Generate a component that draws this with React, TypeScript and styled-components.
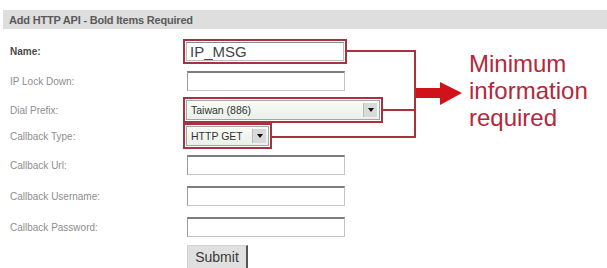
import React from "react";
import styled, { createGlobalStyle } from "styled-components";

const GlobalStyle = createGlobalStyle`
  html, body {
    margin: 0;
    padding: 0;
    background: #ffffff;
    font-family: "Liberation Sans", Arial, sans-serif;
  }
`;

const Page = styled.div`
  position: relative;
  width: 607px;
  height: 268px;
  overflow: hidden;
  padding-top: 10px;
  box-sizing: border-box;
`;

const HeaderBar = styled.div`
  margin-left: 3px;
  height: 19px;
  background: #dedede;
  display: flex;
  align-items: center;
  padding-left: 6px;
  font-size: 11px;
  font-weight: bold;
  color: #5a5a5a;
  letter-spacing: -0.2px;
`;

const Form = styled.div`
  display: flex;
  flex-direction: column;
  padding-top: 8px;
`;

const Row = styled.div<{ $h: number }>`
  display: grid;
  grid-template-columns: 183px 1fr;
  align-items: center;
  height: ${(p) => p.$h}px;
`;

const Label = styled.div<{ $bold?: boolean }>`
  padding-left: 10px;
  font-size: 10px;
  color: ${(p) => (p.$bold ? "#4a4a4a" : "#8e8e8e")};
  font-weight: ${(p) => (p.$bold ? "bold" : "normal")};
`;

const Required = styled.div<{ $w: number }>`
  width: ${(p) => p.$w}px;
  box-sizing: border-box;
  border: 2px solid #a8323f;
  padding: 1px;
  display: flex;
`;

const TextInput = styled.input<{ $big?: boolean }>`
  box-sizing: border-box;
  width: 158px;
  height: 20px;
  margin: 0 0 0 4px;
  padding: 0 3px;
  border: 1px solid #c4c4c4;
  border-top: 2px solid #7d7d7d;
  border-left: 1px solid #9a9a9a;
  background: #fff;
  font-family: "Liberation Sans", Arial, sans-serif;
  font-size: ${(p) => (p.$big ? 15 : 11)}px;
  color: #444;
  outline: none;
`;

const NameInput = styled(TextInput)`
  flex: 1;
  margin: 0;
  height: 19px;
  border: 1px solid #bdbdbd;
  border-top: 1px solid #8a8a8a;
`;

const Select = styled.div`
  flex: 1;
  height: 18px;
  display: flex;
  align-items: center;
  justify-content: space-between;
  border: 1px solid #a5a5a5;
  background: linear-gradient(#f8fbf7, #eaf1e9);
  padding-left: 4px;
  font-size: 10.5px;
  color: #333;
`;

const ArrowBtn = styled.div`
  width: 13px;
  height: 14px;
  margin-right: 2px;
  background: #d9d9d9;
  border-left: 1px solid #bbb;
  display: flex;
  align-items: center;
  justify-content: center;
  &::after {
    content: "";
    border-left: 3px solid transparent;
    border-right: 3px solid transparent;
    border-top: 4px solid #111;
  }
`;

const SubmitButton = styled.button`
  margin-left: 4px;
  width: 61px;
  height: 24px;
  background: #e0e0e0;
  border: 1px solid #d2d2d2;
  border-right: 2px solid #555;
  font-family: "Liberation Sans", Arial, sans-serif;
  font-size: 14px;
  color: #3a3a3a;
  padding: 0;
`;

const Note = styled.div`
  position: absolute;
  left: 469px;
  top: 50px;
  font-size: 24px;
  line-height: 27px;
  color: #b3283b;
`;

const Connectors = styled.svg`
  position: absolute;
  left: 0;
  top: 0;
  pointer-events: none;
`;

export default function App() {
  return (
    <>
      <GlobalStyle />
      <Page>
        <HeaderBar>Add HTTP API - Bold Items Required</HeaderBar>
        <Form>
          <Row $h={28}>
            <Label $bold>Name:</Label>
            <Required $w={164}>
              <NameInput $big defaultValue="IP_MSG" />
            </Required>
          </Row>
          <Row $h={32}>
            <Label>IP Lock Down:</Label>
            <TextInput />
          </Row>
          <Row $h={26}>
            <Label>Dial Prefix:</Label>
            <Required $w={200}>
              <Select>
                Taiwan (886)
                <ArrowBtn />
              </Select>
            </Required>
          </Row>
          <Row $h={24}>
            <Label>Callback Type:</Label>
            <Required $w={89}>
              <Select>
                HTTP GET
                <ArrowBtn />
              </Select>
            </Required>
          </Row>
          <Row $h={36}>
            <Label>Callback Url:</Label>
            <TextInput />
          </Row>
          <Row $h={26}>
            <Label>Callback Username:</Label>
            <TextInput />
          </Row>
          <Row $h={36}>
            <Label>Callback Password:</Label>
            <TextInput />
          </Row>
          <Row $h={24}>
            <div />
            <div>
              <SubmitButton>Submit</SubmitButton>
            </div>
          </Row>
        </Form>
        <Connectors width={607} height={268} viewBox="0 0 607 268">
          <g stroke="#a8323f" strokeWidth={2} fill="none">
            <polyline points="347,51 415,51 415,137 272,137" />
            <line x1={383} y1={110} x2={415} y2={110} />
          </g>
          <polygon
            points="416,88 440,88 440,82 462,93 440,105 440,98 416,98"
            fill="#d0121b"
          />
        </Connectors>
        <Note>
          Minimum
          <br />
          information
          <br />
          required
        </Note>
      </Page>
    </>
  );
}
